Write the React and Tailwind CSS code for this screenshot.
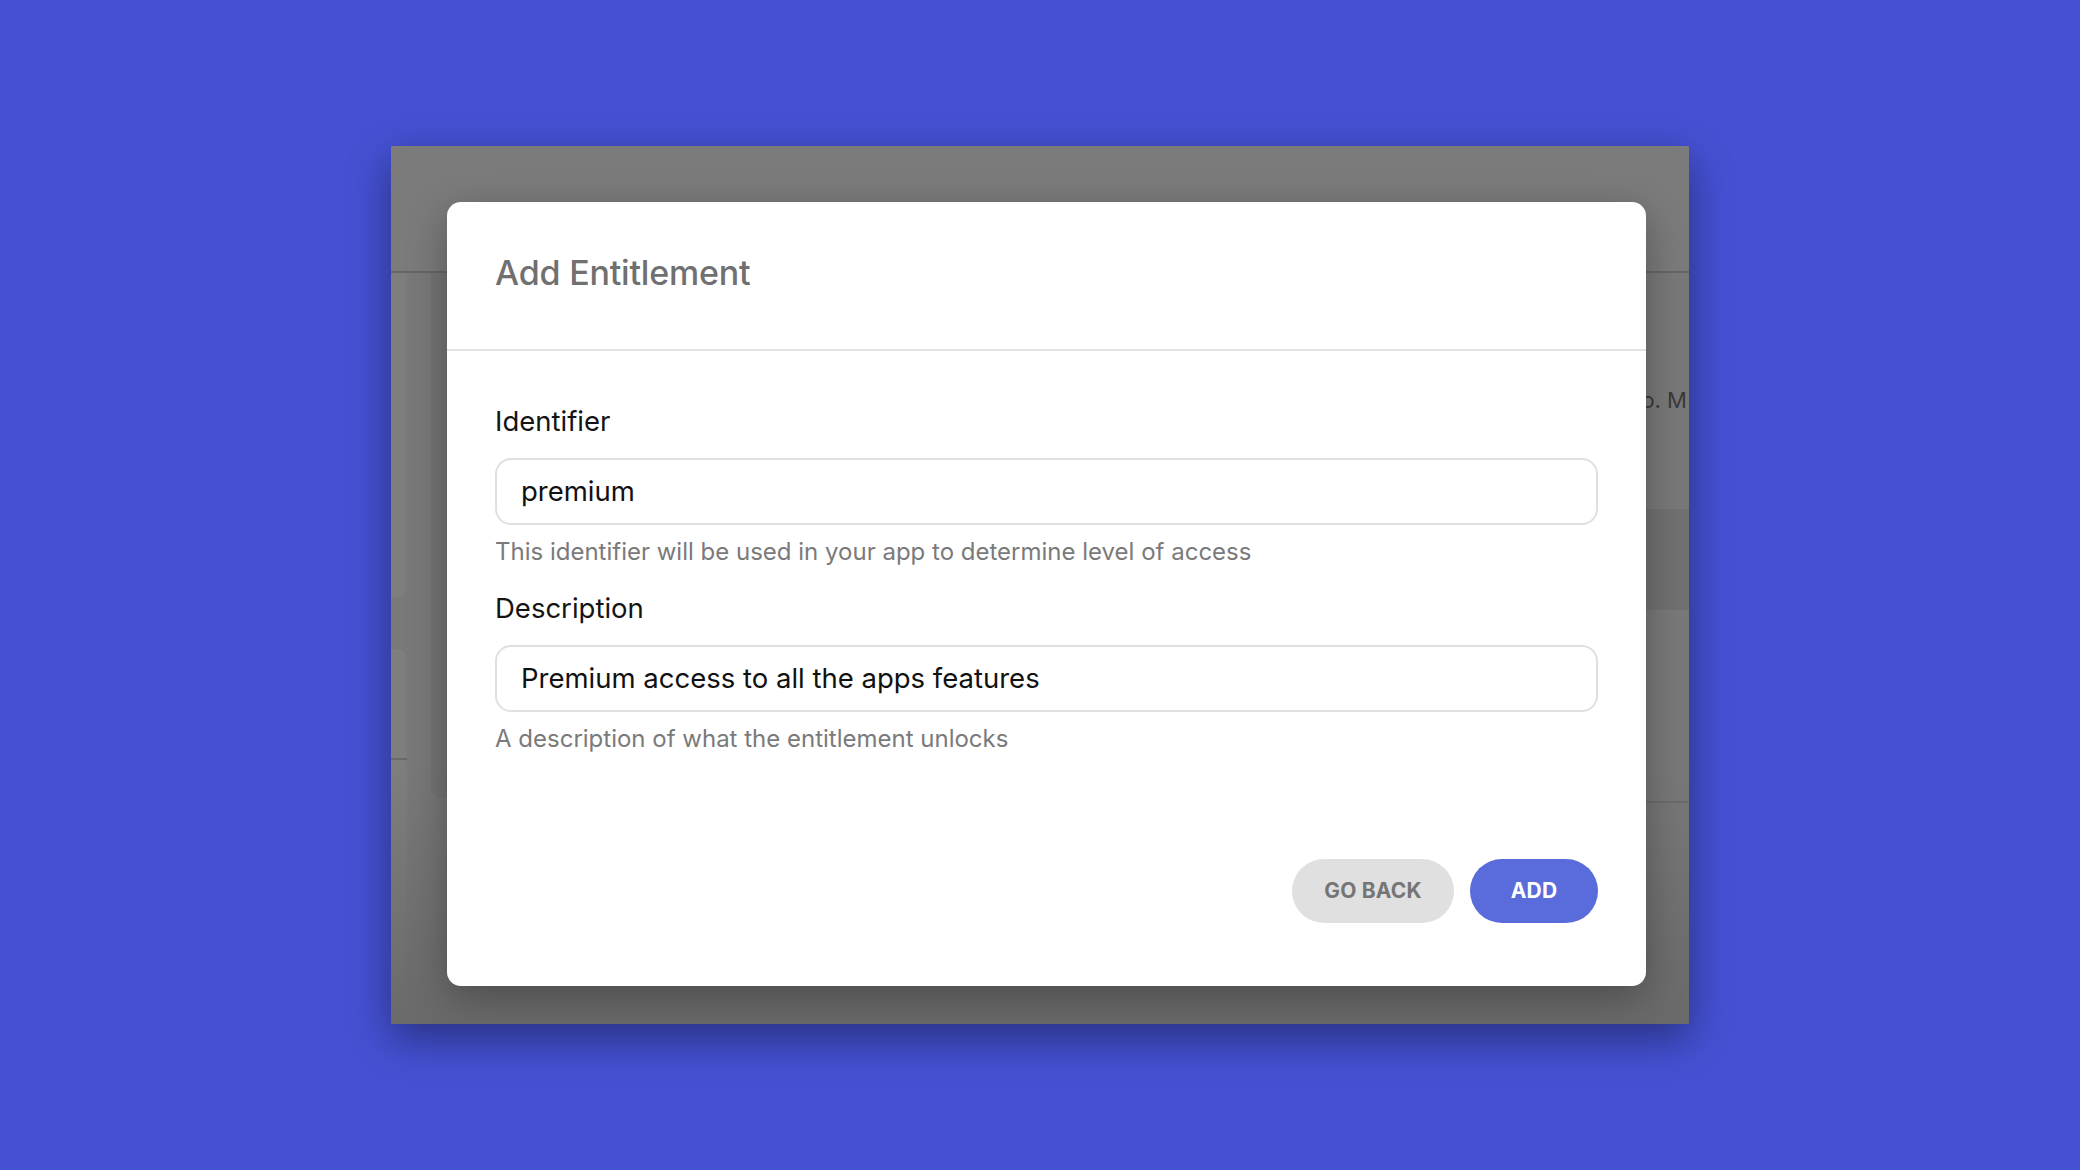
import React from "react";

const font = { fontFamily: "Inter, 'Noto Sans', sans-serif" };

function Field({ label, value, help, first }) {
  return (
    <div className="flex flex-col">
      <div className={`${first ? "mt-[54px]" : "mt-[25px]"} h-[32px] leading-[32px] text-[27.5px] text-[#141414]`}>{label}</div>
      <div className="mt-[21px] h-[67px] rounded-[16px] border-2 border-[#e0e0e0] bg-white flex items-center pl-[24px] text-[27.5px] text-[#111111]">
        {value}
      </div>
      <div className="mt-[12px] h-[30px] leading-[30px] text-[24px] text-[#7a7a7a]">{help}</div>
    </div>
  );
}

export default function App() {
  return (
    <div style={font} className="w-full h-[1170px] bg-[#4451d3] flex items-center justify-center overflow-hidden">
      <div className="relative w-[1298px] h-[878px] bg-[#797979] overflow-hidden shadow-[0_14px_40px_rgba(0,0,0,0.4)]">
        {/* dimmed dashboard behind the dialog */}
        <div className="absolute left-0 top-0 w-full h-[126px] bg-[#7b7b7b]" />
        <div className="absolute left-0 top-[125px] w-full h-[2px] bg-[#666666]" />
        <div className="absolute left-0 top-[127px] w-[16px] h-[324px] rounded-br-[10px] bg-[#7e7e7e]" />
        <div className="absolute left-0 top-[503px] w-[16px] h-[364px] rounded-r-[10px] bg-[#7e7e7e]" />
        <div className="absolute left-0 top-[612px] w-[16px] h-[2px] bg-[#6a6a6a]" />
        <div className="absolute left-[40px] top-[127px] w-[20px] h-[525px] rounded-bl-[10px] bg-[#747474]" />
        <div className="absolute right-0 top-[363px] w-[60px] h-[101px] bg-[#717171]" />
        <div className="absolute right-0 top-[655px] w-[60px] h-[2px] bg-[#6c6c6c]" />
        <div className="absolute right-[2px] top-[238px] text-[22px] leading-[32px] text-[#3a3a3a] whitespace-nowrap">
          to. M
        </div>
        <div className="absolute left-0 right-0 bottom-0 h-[260px] bg-gradient-to-b from-transparent to-[#6a6a6a]" />

        {/* dialog */}
        <div className="absolute left-[56px] top-[56px] w-[1199px] h-[784px] bg-white rounded-[14px] shadow-[0_12px_40px_rgba(0,0,0,0.3)] flex flex-col">
          <div className="h-[147px] px-[48px] flex items-center pb-[6px]">
            <div className="text-[34px] font-medium text-[#707070] tracking-[-0.2px]">Add Entitlement</div>
          </div>
          <div className="h-[2px] bg-[#e3e3e3]" />
          <div className="px-[48px] flex flex-col">
            <Field
              first
              label="Identifier"
              value="premium"
              help="This identifier will be used in your app to determine level of access"
            />
            <Field
              label="Description"
              value="Premium access to all the apps features"
              help="A description of what the entitlement unlocks"
            />
            <div className="mt-[105px] flex justify-end gap-[16px]">
              <button className="w-[162px] h-[64px] rounded-full bg-[#e0e0e0] text-[#757575] text-[21px] font-bold tracking-[0.2px]">
                GO BACK
              </button>
              <button className="w-[128px] h-[64px] rounded-full bg-[#5a6cdb] text-white text-[21px] font-bold tracking-[0.2px]">
                ADD
              </button>
            </div>
          </div>
        </div>
      </div>
    </div>
  );
}
